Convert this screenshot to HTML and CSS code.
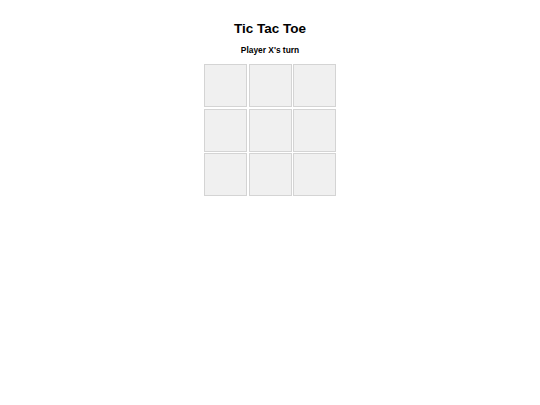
FILE: index.html
```html
<!DOCTYPE html>
<html>
<head>
<meta charset="utf-8">
<title>Tic Tac Toe</title>
<link rel="stylesheet" href="styles.css">
</head>
<body>
<div class="app">
  <h1 class="title">Tic Tac Toe</h1>
  <div class="status">Player X's turn</div>
  <div class="board">
    <div class="cell"></div><div class="cell"></div><div class="cell"></div>
    <div class="cell"></div><div class="cell"></div><div class="cell"></div>
    <div class="cell"></div><div class="cell"></div><div class="cell"></div>
  </div>
</div>
</body>
</html>
```
FILE: styles.css
```css
html, body {
  margin: 0;
  padding: 0;
  background: #ffffff;
}
body {
  font-family: "Liberation Sans", Arial, sans-serif;
  color: #000;
}
.app {
  display: flex;
  flex-direction: column;
  align-items: center;
  padding-top: 21px;
}
.title {
  margin: 0;
  font-size: 13.5px;
  line-height: 16px;
  font-weight: bold;
}
.status {
  margin-top: 8px;
  font-size: 8.4px;
  line-height: 10px;
  font-weight: bold;
}
.board {
  margin-top: 9px;
  display: grid;
  grid-template-columns: repeat(3, 43px);
  grid-template-rows: repeat(3, 43px);
  gap: 1.5px;
}
.cell {
  box-sizing: border-box;
  background: #f0f0f0;
  border: 1px solid #d4d4d4;
}
```
